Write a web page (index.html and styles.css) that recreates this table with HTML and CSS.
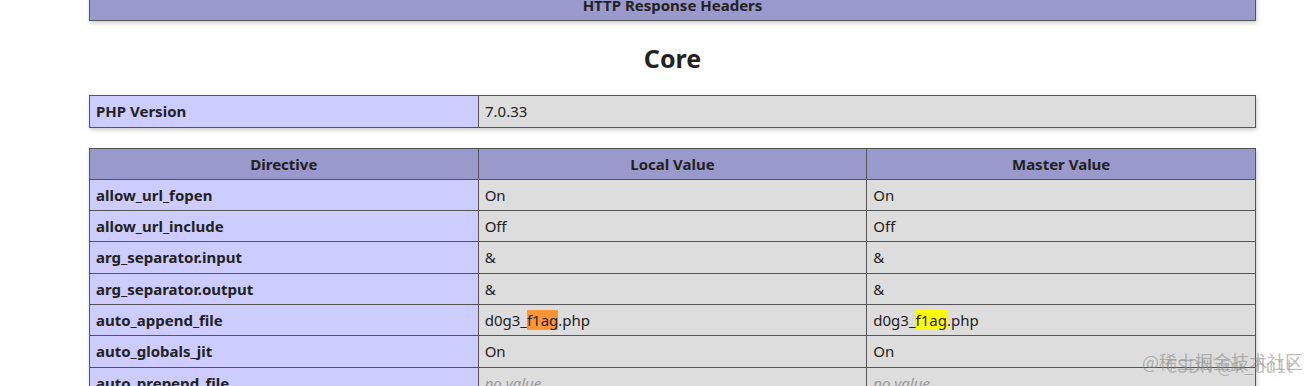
FILE: index.html
```html
<!DOCTYPE html>
<html>
<head>
<meta charset="utf-8">
<link rel="stylesheet" href="styles.css">
</head>
<body>
<div class="page">
  <table class="tbl top">
    <tr class="h"><th>HTTP Response Headers</th></tr>
  </table>
  <h2 class="title">Core</h2>
  <table class="tbl">
    <tr><td class="e">PHP Version</td><td class="v">7.0.33</td></tr>
  </table>
  <table class="tbl three">
    <tr class="h"><th>Directive</th><th>Local Value</th><th>Master Value</th></tr>
    <tr><td class="e">allow_url_fopen</td><td class="v">On</td><td class="v">On</td></tr>
    <tr><td class="e">allow_url_include</td><td class="v">Off</td><td class="v">Off</td></tr>
    <tr><td class="e">arg_separator.input</td><td class="v">&amp;</td><td class="v">&amp;</td></tr>
    <tr><td class="e">arg_separator.output</td><td class="v">&amp;</td><td class="v">&amp;</td></tr>
    <tr><td class="e">auto_append_file</td><td class="v">d0g3_<span class="hl-cur">f1ag</span>.php</td><td class="v">d0g3_<span class="hl">f1ag</span>.php</td></tr>
    <tr><td class="e">auto_globals_jit</td><td class="v">On</td><td class="v">On</td></tr>
    <tr><td class="e">auto_prepend_file</td><td class="v"><i>no value</i></td><td class="v"><i>no value</i></td></tr>
  </table>
</div>
<div class="wm">
  <span class="wm1">@稀土掘金技术社区</span>
  <span class="wm2">CSDN @k_du1t</span>
</div>
</body>
</html>
```

FILE: styles.css
```css
html, body {
  margin: 0;
  padding: 0;
  background: #fff;
  overflow: hidden;
}
body {
  width: 1315px;
  height: 386px;
  position: relative;
  font-family: "Noto Sans", "Open Sans", "Noto Sans CJK SC", sans-serif;
  color: #222;
}
.page {
  padding-left: 89px;
  margin-top: -11px;
}
.tbl {
  border-collapse: collapse;
  border: 0;
  width: 1167px;
  box-shadow: 1px 2px 4px #ccc;
  margin: 0 0 20px 0;
  table-layout: fixed;
}
.tbl.top {
  margin-bottom: 0;
}
.tbl td, .tbl th {
  border: 1px solid #555;
  font-size: 15px;
  line-height: 20.3px;
  padding: 5px 6px;
  text-align: left;
  vertical-align: baseline;
}
.tbl .e {
  width: 376px;
}
.h {
  background: #99c;
}
.h th {
  text-align: center;
  font-weight: bold;
  color: #222;
}
.e {
  background: #ccf;
  font-weight: bold;
  color: #222;
}
.v {
  background: #ddd;
  color: #222;
}
.v i {
  color: #999;
}
.title {
  margin: 22px 0 22px 0;
  width: 1167px;
  text-align: center;
  font-size: 25px;
  line-height: 30px;
  font-weight: bold;
  color: #222;
}
.hl {
  background: #ffff00;
}
.hl-cur {
  background: #ff9632;
}
.wm {
  position: absolute;
  left: 1142px;
  top: 348px;
  width: 170px;
  height: 30px;
  pointer-events: none;
}
.wm1, .wm2 {
  position: absolute;
  white-space: nowrap;
  font-family: "Noto Sans CJK SC", "Noto Sans", sans-serif;
  color: rgba(130, 130, 130, 0.55);
}
.wm1 {
  left: 0;
  top: 0;
  font-size: 18px;
}
.wm2 {
  left: 24px;
  top: 4px;
  font-size: 18px;
  color: rgba(140, 140, 140, 0.5);
}
```
